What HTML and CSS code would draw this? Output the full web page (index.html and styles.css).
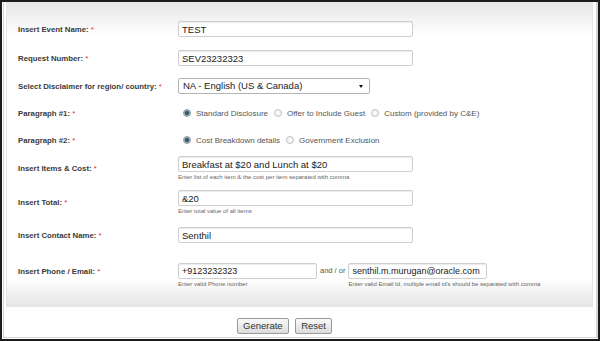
FILE: index.html
```html
<!DOCTYPE html>
<html>
<head>
	<title>Event Disclaimer</title>
	<link rel="stylesheet" href="styles.css">
</head>
<body>
	<div class="frame">
		<div class="page">
			<form class="panel">
				<label class="lbl">Insert Event Name: <span class="req">*</span></label>
				<div class="cell"><input class="txt wide" type="text" value="TEST"></div>

				<label class="lbl">Request Number: <span class="req">*</span></label>
				<div class="cell"><input class="txt wide" type="text" value="SEV23232323"></div>

				<label class="lbl">Select Disclaimer for region/ country: <span class="req">*</span></label>
				<div class="cell">
					<div class="select">NA - English (US &amp; Canada)<span class="arrow"></span></div>
				</div>

				<label class="lbl">Paragraph #1: <span class="req">*</span></label>
				<div class="cell radios">
					<span class="radio on"></span><span class="opt">Standard Disclosure</span>
					<span class="radio"></span><span class="opt">Offer to Include Guest</span>
					<span class="radio"></span><span class="opt">Custom (provided by C&amp;E)</span>
				</div>

				<label class="lbl">Paragraph #2: <span class="req">*</span></label>
				<div class="cell radios">
					<span class="radio on"></span><span class="opt">Cost Breakdown details</span>
					<span class="radio"></span><span class="opt">Government Exclusion</span>
				</div>

				<label class="lbl">Insert Items &amp; Cost: <span class="req">*</span></label>
				<div class="cell">
					<input class="txt wide" type="text" value="Breakfast at $20 and Lunch at $20">
					<div class="help">Enter list of each item &amp; the cost per item separated with comma</div>
				</div>

				<label class="lbl">Insert Total: <span class="req">*</span></label>
				<div class="cell">
					<input class="txt wide" type="text" value="&amp;20">
					<div class="help">Enter total value of all items</div>
				</div>

				<label class="lbl">Insert Contact Name: <span class="req">*</span></label>
				<div class="cell"><input class="txt wide" type="text" value="Senthil"></div>

				<label class="lbl top">Insert Phone / Email: <span class="req">*</span></label>
				<div class="cell contact">
					<div>
						<input class="txt half" type="text" value="+9123232323">
						<div class="help">Enter valid Phone number</div>
					</div>
					<span class="andor">and / or</span>
					<div>
						<input class="txt half" type="text" value="senthil.m.murugan@oracle.com">
						<div class="help">Enter valid Email Id, multiple email id's should be separated with comma</div>
					</div>
				</div>
			</form>
			<div class="footer">
				<button type="button" class="btn">Generate</button>
				<button type="button" class="btn">Reset</button>
			</div>
		</div>
	</div>
</body>
</html>
```

FILE: styles.css
```css
* {
	box-sizing: border-box;
	font-family: 'Liberation Sans', Arial, sans-serif;
}
html, body {
	margin: 0;
	background-color: white;
}
.frame {
	width: 600px;
	height: 341px;
	border: 2px solid #1c1c1c;
	padding: 0 0 1px 1px;
}
.page {
	height: 100%;
	border-left: 1px solid #d4d4d4;
	border-right: 2px solid #d4d4d4;
	border-bottom: 1px solid #d4d4d4;
	padding: 0 3px 0 2px;
}
.panel {
	display: grid;
	grid-template-columns: 160px 1fr;
	grid-template-rows: 28px 30px 26px 28px 26px 30px 38px 28px 50px;
	align-items: center;
	height: 305px;
	padding: 13px 0 0 11px;
	border: 1px solid #e4e4e4;
	border-top: none;
	background: linear-gradient(#e6e6e6 0px, #ffffff 34px, #ffffff 276px, #ebebeb 298px, #e6e6e6 305px);
}
.lbl {
	font-size: 7.8px;
	font-weight: bold;
	color: #3a3a3a;
}
.lbl.top {
	align-self: start;
	padding-top: 18px;
}
.req {
	color: #e0302a;
	font-weight: normal;
}
.txt {
	display: block;
	height: 16px;
	border: 1px solid #cfcfcf;
	border-radius: 2px;
	box-shadow: inset 0 1px 1px #ececec;
	padding: 0 3px;
	font-size: 9.5px;
	color: #222;
	background: white;
}
.wide {
	width: 235px;
}
.half {
	width: 139px;
	font-size: 9px;
}
.select {
	position: relative;
	width: 192px;
	height: 16px;
	line-height: 14px;
	border: 1px solid #b4b4b4;
	border-radius: 2px;
	padding: 0 4px;
	font-size: 9.5px;
	color: #222;
}
.arrow {
	position: absolute;
	right: 6px;
	top: 6px;
	border-left: 2.5px solid transparent;
	border-right: 2.5px solid transparent;
	border-top: 3px solid #111;
}
.radios {
	display: flex;
	align-items: center;
	padding-left: 1px;
}
.radio {
	width: 8px;
	height: 8px;
	border-radius: 50%;
	border: 1px solid #c2c2c2;
	background: radial-gradient(#ffffff, #e8e8e8);
	margin: 0 5px 0 4px;
}
.radio.on {
	border-color: #8a9aa4;
	background: radial-gradient(#2f4f5f 0, #3d6070 40%, #b8c4ca 70%, #e6eaec 100%);
}
.opt {
	font-size: 8px;
	color: #555;
	margin-right: 2px;
}
.help {
	font-size: 6px;
	color: #666;
	margin-top: 2px;
	height: 6px;
	white-space: nowrap;
}
.contact {
	display: flex;
	align-items: flex-start;
	padding-top: 14px;
	align-self: start;
}
.andor {
	font-size: 7.5px;
	color: #555;
	margin: 0 3px;
	line-height: 16px;
}
.footer {
	padding: 8px 30px 0 0;
	text-align: center;
}
.btn {
	height: 16px;
	padding: 0 5px;
	border: 1px solid #9a9a9a;
	border-radius: 2px;
	background: linear-gradient(#fafafa, #dcdcdc);
	font-size: 9.5px;
	color: #333;
	margin: 0 1px;
}
```
